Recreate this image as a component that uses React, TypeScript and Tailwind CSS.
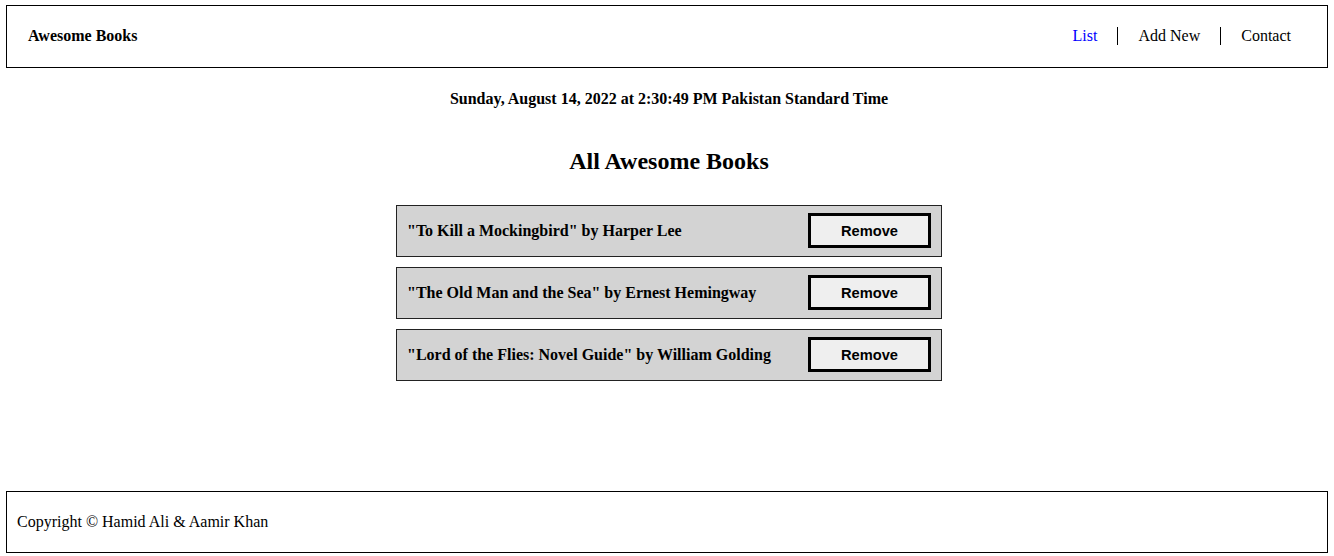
const books = [
  { title: 'To Kill a Mockingbird', author: 'Harper Lee' },
  { title: 'The Old Man and the Sea', author: 'Ernest Hemingway' },
  { title: 'Lord of the Flies: Novel Guide', author: 'William Golding' },
];

const serif = "font-['Liberation_Serif','Times_New_Roman',serif]";

export default function App() {
  return (
    <div className={`h-[556px] flex flex-col bg-white text-black ${serif}`}>
      {/* Header */}
      <header className="mx-[6px] mt-[5px] h-[63px] border border-black flex items-center justify-between pl-[21px] pr-4 pb-[2px]">
        <h1 className="text-base font-bold">Awesome Books</h1>
        <nav>
          <ul className="flex items-center text-base">
            <li className="px-5 border-r border-black leading-[18px] text-[#0000ff]">List</li>
            <li className="px-5 border-r border-black leading-[18px]">Add New</li>
            <li className="px-5 leading-[18px]">Contact</li>
          </ul>
        </nav>
      </header>

      <main className="flex-1 flex flex-col items-center pl-[4px]">
        <p className="mt-[22px] text-base font-bold leading-[18px]">
          Sunday, August 14, 2022 at 2:30:49 PM Pakistan Standard Time
        </p>
        <h2 className="mt-[40px] text-2xl font-bold leading-[27px]">All Awesome Books</h2>

        {/* Book list */}
        <ul className="mt-[30px] w-[546px] flex flex-col gap-[10px]">
          {books.map(b => (
            <li
              key={b.title}
              className="h-[52px] bg-[#d3d3d3] border border-[#222] flex items-center justify-between px-[10px]"
            >
              <span className="text-base font-bold">
                "{b.title}" by {b.author}
              </span>
              <button className="w-[123px] h-[35px] mt-[-1px] border-[3px] border-black bg-[#efefef] font-['Liberation_Sans',Arial,sans-serif] text-[14.67px] font-bold">
                Remove
              </button>
            </li>
          ))}
        </ul>
      </main>

      {/* Footer */}
      <footer className="mx-[6px] mb-[3px] h-[62px] border border-black flex items-center px-[10px]">
        <p className="text-base">Copyright © Hamid Ali &amp; Aamir Khan</p>
      </footer>
    </div>
  );
}
